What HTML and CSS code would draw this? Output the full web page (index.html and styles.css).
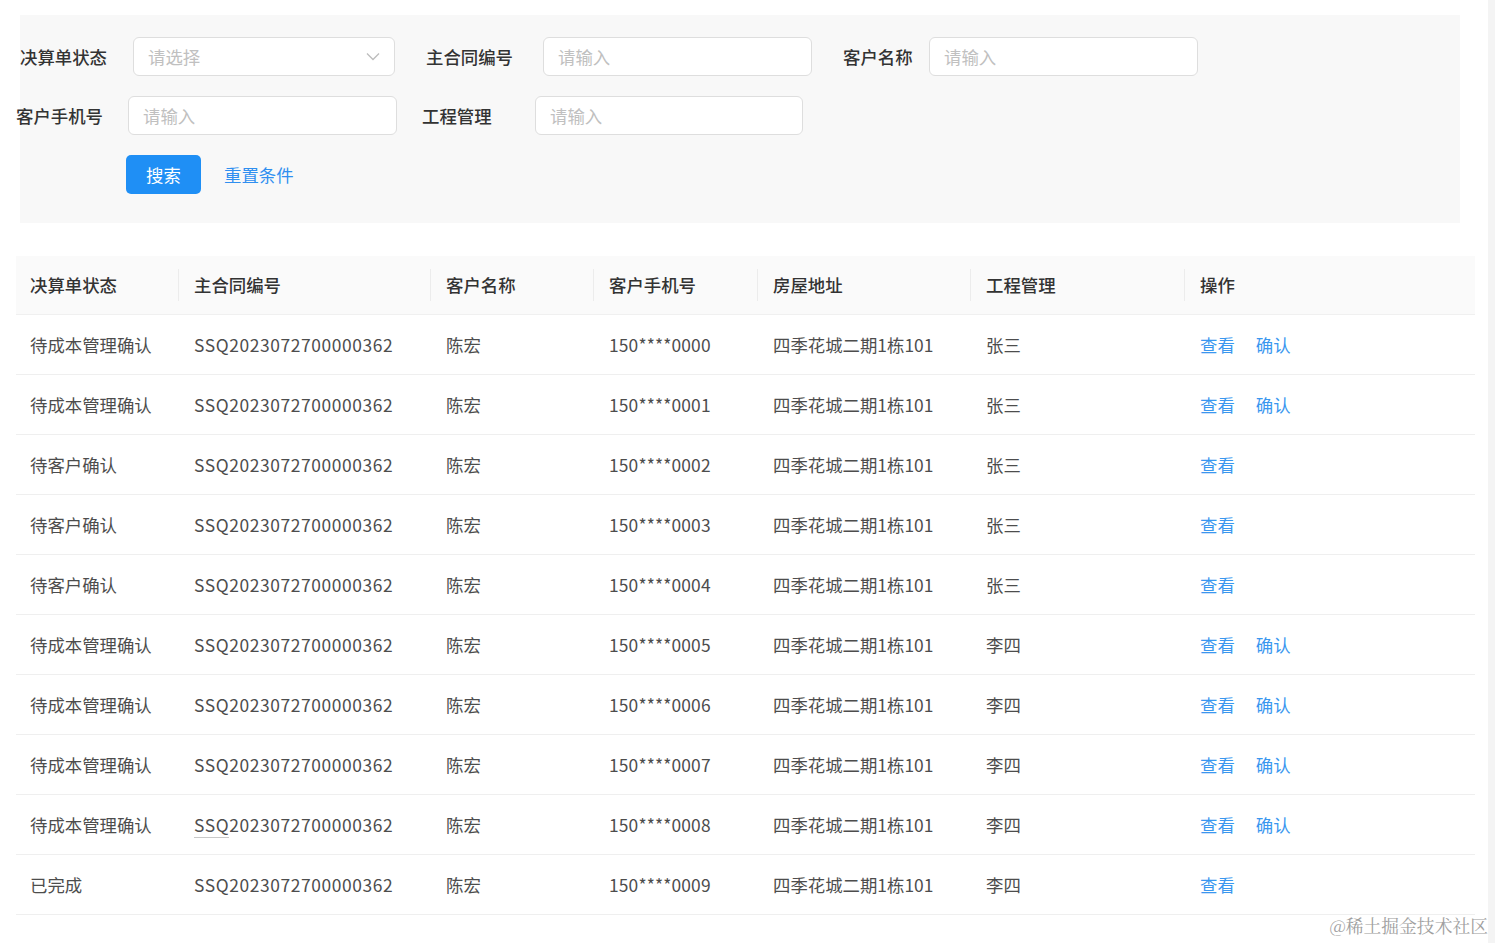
FILE: index.html
```html
<!DOCTYPE html>
<html lang="zh-CN">
<head>
<meta charset="utf-8">
<title>决算单</title>
<link rel="stylesheet" href="styles.css">
</head>
<body>
<div class="page">
  <div class="filter">
    <div class="form-row">
      <div class="field f-r1a">
        <span class="label">决算单状态</span>
        <div class="input select w262"><span class="ph">请选择</span>
          <svg class="chev" width="14" height="9" viewBox="0 0 14 9"><path d="M1 1.5 L7 7.5 L13 1.5" fill="none" stroke="#bdbdbd" stroke-width="1.3"/></svg>
        </div>
      </div>
      <div class="field f-r1b">
        <span class="label">主合同编号</span>
        <div class="input w269"><span class="ph">请输入</span></div>
      </div>
      <div class="field f-r1c">
        <span class="label">客户名称</span>
        <div class="input w269"><span class="ph">请输入</span></div>
      </div>
    </div>
    <div class="form-row row2">
      <div class="field f-r2a">
        <span class="label">客户手机号</span>
        <div class="input w269"><span class="ph">请输入</span></div>
      </div>
      <div class="field f-r2b">
        <span class="label">工程管理</span>
        <div class="input w268"><span class="ph">请输入</span></div>
      </div>
    </div>
    <div class="form-row row3">
      <button class="btn-primary">搜索</button>
      <a class="link-reset">重置条件</a>
    </div>
  </div>

  <table class="grid">
    <colgroup>
      <col class="c1"><col class="c2"><col class="c3"><col class="c4"><col class="c5"><col class="c6"><col class="c7">
    </colgroup>
    <thead>
      <tr><th>决算单状态</th><th>主合同编号</th><th>客户名称</th><th>客户手机号</th><th>房屋地址</th><th>工程管理</th><th>操作</th></tr>
    </thead>
    <tbody>
      <tr><td>待成本管理确认</td><td>SSQ2023072700000362</td><td>陈宏</td><td>150****0000</td><td>四季花城二期1栋101</td><td>张三</td><td><a class="op">查看</a><a class="op">确认</a></td></tr>
      <tr><td>待成本管理确认</td><td>SSQ2023072700000362</td><td>陈宏</td><td>150****0001</td><td>四季花城二期1栋101</td><td>张三</td><td><a class="op">查看</a><a class="op">确认</a></td></tr>
      <tr><td>待客户确认</td><td>SSQ2023072700000362</td><td>陈宏</td><td>150****0002</td><td>四季花城二期1栋101</td><td>张三</td><td><a class="op">查看</a></td></tr>
      <tr><td>待客户确认</td><td>SSQ2023072700000362</td><td>陈宏</td><td>150****0003</td><td>四季花城二期1栋101</td><td>张三</td><td><a class="op">查看</a></td></tr>
      <tr><td>待客户确认</td><td>SSQ2023072700000362</td><td>陈宏</td><td>150****0004</td><td>四季花城二期1栋101</td><td>张三</td><td><a class="op">查看</a></td></tr>
      <tr><td>待成本管理确认</td><td>SSQ2023072700000362</td><td>陈宏</td><td>150****0005</td><td>四季花城二期1栋101</td><td>李四</td><td><a class="op">查看</a><a class="op">确认</a></td></tr>
      <tr><td>待成本管理确认</td><td>SSQ2023072700000362</td><td>陈宏</td><td>150****0006</td><td>四季花城二期1栋101</td><td>李四</td><td><a class="op">查看</a><a class="op">确认</a></td></tr>
      <tr><td>待成本管理确认</td><td>SSQ2023072700000362</td><td>陈宏</td><td>150****0007</td><td>四季花城二期1栋101</td><td>李四</td><td><a class="op">查看</a><a class="op">确认</a></td></tr>
      <tr><td>待成本管理确认</td><td><span class="ul">SSQ</span>2023072700000362</td><td>陈宏</td><td>150****0008</td><td>四季花城二期1栋101</td><td>李四</td><td><a class="op">查看</a><a class="op">确认</a></td></tr>
      <tr><td>已完成</td><td>SSQ2023072700000362</td><td>陈宏</td><td>150****0009</td><td>四季花城二期1栋101</td><td>李四</td><td><a class="op">查看</a></td></tr>
    </tbody>
  </table>
</div>
<div class="scroll-strip"></div>
<div class="watermark">@稀土掘金技术社区</div>
</body>
</html>
```

FILE: styles.css
```css
* { box-sizing: border-box; }
html, body { margin: 0; padding: 0; background: #fff; }
body {
  font-family: "Noto Sans CJK SC", "Noto Sans", sans-serif;
  font-size: 17.4px;
  color: #4a4a4a;
  width: 1495px;
  height: 943px;
  overflow: hidden;
  position: relative;
}
.page { padding: 15px 0 0 16px; }

.filter {
  margin-left: 4px;
  width: 1440px;
  height: 208px;
  background: #f8f8f8;
  padding-top: 22px;
}
.form-row { display: flex; align-items: center; height: 39px; }
.row2 { margin-top: 20px; margin-left: -4px; }
.row3 { margin-top: 20px; padding-left: 106px; }

.field { display: flex; align-items: center; }
.label { color: #333; font-weight: 500; white-space: nowrap; }
.f-r1a .label { width: 113px; }
.f-r1a { margin-right: 31px; }
.f-r1b .label { width: 117px; }
.f-r1b { margin-right: 31px; }
.f-r1c .label { width: 86px; }
.f-r2a .label { width: 112px; }
.f-r2a { margin-right: 25px; }
.f-r2b .label { width: 113px; }

.input {
  height: 39px;
  background: #fff;
  border: 1px solid #dedede;
  border-radius: 6px;
  display: flex;
  align-items: center;
  padding-left: 14px;
  padding-right: 14px;
}
.w262 { width: 262px; }
.w269 { width: 269px; }
.w268 { width: 268px; }
.ph { color: #c0c0c0; flex: 1; }
.chev { display: block; }

.btn-primary {
  width: 75px;
  height: 39px;
  border: none;
  border-radius: 5px;
  background: #1f8ff5;
  color: #fff;
  font-family: inherit;
  font-size: 17.4px;
  padding: 0;
}
.link-reset { margin-left: 23px; color: #2f8ff0; }

.grid {
  margin-top: 33px;
  width: 1459px;
  border-collapse: collapse;
  table-layout: fixed;
}
.c1 { width: 162px; } .c2 { width: 252px; } .c3 { width: 163px; } .c4 { width: 164px; }
.c5 { width: 213px; } .c6 { width: 214px; } .c7 { width: 291px; }

.grid th {
  height: 58px;
  background: #fafafa;
  text-align: left;
  font-weight: 500;
  color: #333;
  padding: 0 0 0 16px;
  position: relative;
  border-bottom: 1px solid #f0f0f0;
}
.grid th + th::before {
  content: "";
  position: absolute;
  left: 0;
  top: 13px;
  height: 32px;
  width: 1px;
  background: #ececec;
}
.grid td {
  height: 60px;
  padding: 0 0 0 16px;
  border-bottom: 1px solid #efefef;
  white-space: nowrap;
  color: #4d4d4d;
}
.grid th:first-child, .grid td:first-child { padding-left: 14px; }
.grid td:nth-child(2) { letter-spacing: 0.6px; }
.grid td:nth-child(4) { letter-spacing: 0.15px; }
.op { color: #3a97ef; margin-right: 21px; }
.ul { border-bottom: 1px solid #c8c8c8; }

.scroll-strip {
  position: absolute;
  right: 0;
  top: 0;
  width: 7px;
  height: 943px;
  background: #f4f4f4;
}
.watermark {
  position: absolute;
  right: 7px;
  bottom: 5px;
  font-size: 17.8px;
  color: #a0a0a0;
  font-family: "Noto Serif CJK SC", "Noto Sans CJK SC", serif;
}
```
